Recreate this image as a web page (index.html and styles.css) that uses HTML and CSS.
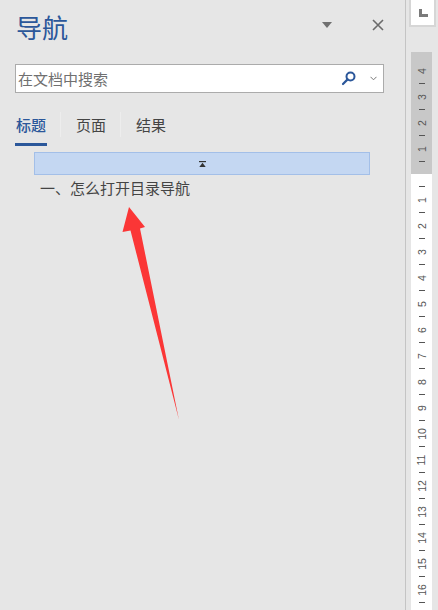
FILE: index.html
```html
<!DOCTYPE html>
<html lang="zh-CN">
<head>
    <meta charset="UTF-8">
    <title>导航</title>
    <link rel="stylesheet" href="styles.css">
</head>
<body>
    <div class="app">
        <div class="pane">
            <div class="pane-header">
                <h1 class="pane-title">导航</h1>
                <div class="header-tools">
                    <span class="menu-arrow"></span>
                    <svg class="close-icon" width="12" height="12" viewBox="0 0 12 12">
                        <path d="M1 1 L11 11 M11 1 L1 11" stroke="#6b6b6b" stroke-width="1.6" fill="none"/>
                    </svg>
                </div>
            </div>

            <div class="search-box">
                <span class="search-text">在文档中搜索</span>
                <svg class="search-icon" width="15" height="15" viewBox="0 0 15 15">
                    <circle cx="9.5" cy="5.5" r="4" stroke="#2b579a" stroke-width="2" fill="none"/>
                    <path d="M6.6 8.4 L2 13" stroke="#2b579a" stroke-width="2.2" stroke-linecap="round"/>
                </svg>
                <svg class="search-more" width="7" height="5" viewBox="0 0 7 5">
                    <path d="M0.5 0.8 L3.5 3.8 L6.5 0.8" stroke="#777" stroke-width="1" fill="none"/>
                </svg>
            </div>

            <div class="tabs">
                <div class="tab active">标题</div>
                <span class="tab-sep"></span>
                <div class="tab">页面</div>
                <span class="tab-sep"></span>
                <div class="tab">结果</div>
            </div>

            <div class="heading-bar">
                <svg width="7" height="6" viewBox="0 0 7 6">
                    <rect x="0" y="0" width="7" height="1.2" fill="#333"/>
                    <polygon points="3.5,1.8 0.3,6 6.7,6" fill="#333"/>
                </svg>
            </div>
            <div class="heading-item">一、怎么打开目录导航</div>
        </div>

        <div class="divider"></div>

        <div class="ruler-col">
            <div class="tab-stop">
                <svg width="9" height="8" viewBox="0 0 9 8">
                    <path d="M0 0 H3 V5 H9 V8 H0 Z" fill="#7a7a7a"/>
                </svg>
            </div>
            <div class="ruler">
                <div class="ruler-margin">
                    <div class="mark"><span class="num">4</span></div>
                    <div class="mark"><span class="dash"></span></div>
                    <div class="mark"><span class="num">3</span></div>
                    <div class="mark"><span class="dash"></span></div>
                    <div class="mark"><span class="num">2</span></div>
                    <div class="mark"><span class="dash"></span></div>
                    <div class="mark"><span class="num">1</span></div>
                    <div class="mark"><span class="dash"></span></div>
                </div>
                <div class="ruler-page">
                    <div class="mark"><span class="dash"></span></div>
                    <div class="mark"><span class="num">1</span></div>
                    <div class="mark"><span class="dash"></span></div>
                    <div class="mark"><span class="num">2</span></div>
                    <div class="mark"><span class="dash"></span></div>
                    <div class="mark"><span class="num">3</span></div>
                    <div class="mark"><span class="dash"></span></div>
                    <div class="mark"><span class="num">4</span></div>
                    <div class="mark"><span class="dash"></span></div>
                    <div class="mark"><span class="num">5</span></div>
                    <div class="mark"><span class="dash"></span></div>
                    <div class="mark"><span class="num">6</span></div>
                    <div class="mark"><span class="dash"></span></div>
                    <div class="mark"><span class="num">7</span></div>
                    <div class="mark"><span class="dash"></span></div>
                    <div class="mark"><span class="num">8</span></div>
                    <div class="mark"><span class="dash"></span></div>
                    <div class="mark"><span class="num">9</span></div>
                    <div class="mark"><span class="dash"></span></div>
                    <div class="mark"><span class="num">10</span></div>
                    <div class="mark"><span class="dash"></span></div>
                    <div class="mark"><span class="num">11</span></div>
                    <div class="mark"><span class="dash"></span></div>
                    <div class="mark"><span class="num">12</span></div>
                    <div class="mark"><span class="dash"></span></div>
                    <div class="mark"><span class="num">13</span></div>
                    <div class="mark"><span class="dash"></span></div>
                    <div class="mark"><span class="num">14</span></div>
                    <div class="mark"><span class="dash"></span></div>
                    <div class="mark"><span class="num">15</span></div>
                    <div class="mark"><span class="dash"></span></div>
                    <div class="mark"><span class="num">16</span></div>
                    <div class="mark"><span class="dash"></span></div>
                </div>
            </div>
        </div>

        <!-- red annotation arrow drawn over the pane -->
        <svg class="annotation" width="438" height="610" viewBox="0 0 438 610">
            <polygon points="129,207 145,227 140,228.5 179,420 130.5,230.5 122.5,232" fill="#fb3636"/>
        </svg>
    </div>
</body>
</html>
```

FILE: styles.css
```css
body {
    margin: 0;
    width: 438px;
    height: 610px;
    overflow: hidden;
    background-color: #e6e6e6;
    font-family: "Noto Sans CJK SC", "Noto Sans", sans-serif;
}

.app {
    position: relative;
    display: flex;
    height: 610px;
}

.pane {
    width: 405px;
    flex-shrink: 0;
}

.pane-header {
    display: flex;
    align-items: center;
    height: 50px;
    padding: 0 21px 0 16px;
}

.pane-title {
    margin: 4px 0 0 0;
    font-size: 26px;
    line-height: 26px;
    font-weight: normal;
    color: #2b579a;
}

.header-tools {
    margin-left: auto;
    display: flex;
    align-items: center;
}

.menu-arrow {
    width: 0;
    height: 0;
    border-left: 5.5px solid transparent;
    border-right: 5.5px solid transparent;
    border-top: 6px solid #707070;
    margin-right: 40px;
}

.close-icon {
    display: block;
}

.search-box {
    display: flex;
    align-items: center;
    box-sizing: border-box;
    height: 29px;
    margin: 14px 21px 0 15px;
    padding: 0 6px 0 2px;
    background-color: #fff;
    border: 1px solid #ababab;
}

.search-text {
    flex: 1;
    font-size: 15px;
    color: #707070;
}

.search-icon {
    display: block;
    margin-right: 14px;
}

.search-more {
    display: block;
}

.tabs {
    display: flex;
    align-items: flex-start;
    height: 44px;
    margin-top: 15px;
    padding: 0 0 0 15px;
}

.tab {
    width: 32px;
    padding-top: 7px;
    height: 28px;
    text-align: center;
    font-size: 15px;
    line-height: 20px;
    color: #444;
}

.tab.active {
    color: #2b579a;
    font-weight: 500;
    border-bottom: 3px solid #2b579a;
}

.tab-sep {
    width: 1px;
    height: 25px;
    margin: 4px 14px 0 13px;
    background-color: #ededed;
}

.heading-bar {
    display: flex;
    align-items: center;
    justify-content: center;
    box-sizing: border-box;
    width: 336px;
    height: 23px;
    margin-left: 34px;
    background-color: #c4d7f2;
    border: 1px solid #a3bfe8;
}

.heading-bar svg {
    display: block;
}

.heading-item {
    padding-left: 40px;
    font-size: 15px;
    line-height: 26px;
    color: #444;
}

.divider {
    width: 1px;
    background-color: #c4c4c4;
    flex-shrink: 0;
}

.ruler-col {
    width: 32px;
    flex-shrink: 0;
}

.tab-stop {
    display: flex;
    align-items: center;
    justify-content: center;
    box-sizing: border-box;
    width: 27px;
    height: 27px;
    margin-left: 3px;
    background-color: #fff;
    border: 2px solid #d6d6d6;
    border-top: none;
}

.tab-stop svg {
    display: block;
    margin: 1px 0 0 1px;
}

.ruler {
    display: flex;
    flex-direction: column;
    width: 21px;
    margin: 25px 0 0 5px;
    height: 558px;
    overflow: hidden;
}

.ruler-margin {
    box-sizing: border-box;
    height: 122px;
    padding-top: 12px;
    background-color: #c8c8c8;
}

.ruler-page {
    flex: 1;
    padding-top: 6px;
    background-color: #fff;
}

.mark {
    display: flex;
    align-items: center;
    justify-content: center;
    height: 13px;
}

.num {
    display: inline-block;
    transform: rotate(-90deg);
    font-family: "Liberation Sans", Arial, sans-serif;
    font-size: 10.5px;
    line-height: 10px;
    color: #555;
}

.dash {
    width: 6px;
    height: 1px;
    background-color: #555;
}

.annotation {
    position: absolute;
    left: 0;
    top: 0;
    pointer-events: none;
}
```
